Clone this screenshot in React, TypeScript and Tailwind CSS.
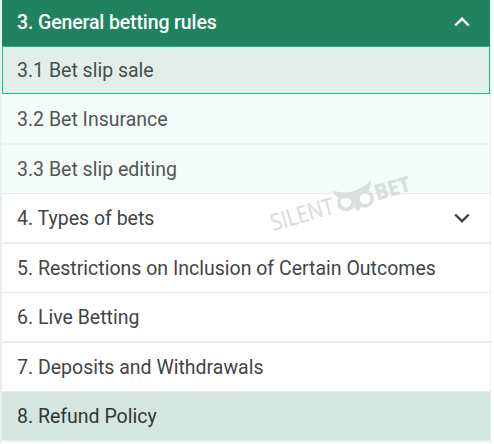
import React from 'react';
import clsx from 'clsx';

const sections = [
  { label: '3. General betting rules', row: 'h-[46px] px-[15px] bg-[#21825f] text-white font-medium tracking-[-0.12px] pb-[2px]', icon: 'up' },
  { label: '3.1 Bet slip sale', row: 'h-[48px] px-[14px] bg-[#e2eeea] border border-[#0cc888] text-[#484d4c]' },
  { label: '3.2 Bet Insurance', row: 'h-[51px] px-[15px] bg-[#f3fcf9] border-b-2 border-[#e8f1ee] text-[#505654]' },
  { label: '3.3 Bet slip editing', row: 'h-[49px] px-[15px] bg-[#f3fcf9] border-b border-[#e3efeb] text-[#505654]' },
  { label: '4. Types of bets', row: 'h-[50px] px-[15px] bg-white border-b-2 border-[#e8f1ee]', icon: 'down' },
  { label: '5. Restrictions on Inclusion of Certain Outcomes', row: 'h-[49px] px-[15px] bg-white border-b border-[#e3efeb]' },
  { label: '6. Live Betting', row: 'h-[50px] px-[15px] bg-white border-b-2 border-[#e8f1ee]' },
  { label: '7. Deposits and Withdrawals', row: 'h-[49px] px-[15px] bg-white border-b border-[#e3efeb]' },
  { label: '8. Refund Policy', row: 'h-[50px] px-[15px] bg-[#d3e7e0] border-b-2 border-[#e8f1ee] text-[#303534]' },
];

const Chevron = ({ up }: { up: boolean }) => (
  <svg className={clsx('w-4 h-[10px] mr-[5.5px]', up && 'rotate-180')} viewBox="0 0 16 10" fill="none" stroke="currentColor" strokeWidth="2.4">
    <path d="M1.2 1.5 L8 8.2 L14.8 1.5" />
  </svg>
);

const Watermark = () => (
  <svg className="absolute left-[260px] top-[165px] w-[160px] h-[75px] pointer-events-none text-[#dadedd]" viewBox="0 0 160 75" fill="currentColor">
    <g fontFamily="'Open Sans', sans-serif" stroke="currentColor" strokeWidth="0.3">
      <text transform="translate(13 66) rotate(-16)" fontSize="23" textLength="65" lengthAdjust="spacingAndGlyphs">SILENT</text>
      <text transform="translate(117 35.500) rotate(-16)" fontSize="21.500" fontWeight="700" textLength="36.500" lengthAdjust="spacingAndGlyphs">BET</text>
    </g>
    {/* owl eyes */}
    <g fill="none" stroke="currentColor" strokeWidth="3.600">
      <circle cx="86" cy="37.300" r="7.200" />
      <circle cx="105" cy="33.700" r="7.200" />
    </g>
    {/* brow and beak */}
    <path d="M72.500 25.500 Q82 28.500 91 27 Q102 24 111 15.500 Q111 20 109 25 Q105 28 101 30 Q98 32 98 35 L98.500 38 L102 40 L98.700 46.500 L94 42 L95 38 Q95 35 91 33.500 Q85 33 79 33 Q74 30 72.500 25.500 Z" />
  </svg>
);

const App = () => {
  return (
    <div className="relative w-[494px] h-[444px] overflow-hidden bg-white font-['Roboto',sans-serif] text-[19.5px] leading-6 text-[#424544]">
      <div className="w-[491px] h-[444px] border-l-2 border-r border-[#e8f1ee]">
        {sections.map((section) => (
          <div key={section.label} className={clsx('flex items-center justify-between', section.row)}>
            <span className="pt-[2px] whitespace-nowrap">{section.label}</span>
            {section.icon && <Chevron up={section.icon === 'up'} />}
          </div>
        ))}
      </div>
      <Watermark />
    </div>
  );
};

export default App;
